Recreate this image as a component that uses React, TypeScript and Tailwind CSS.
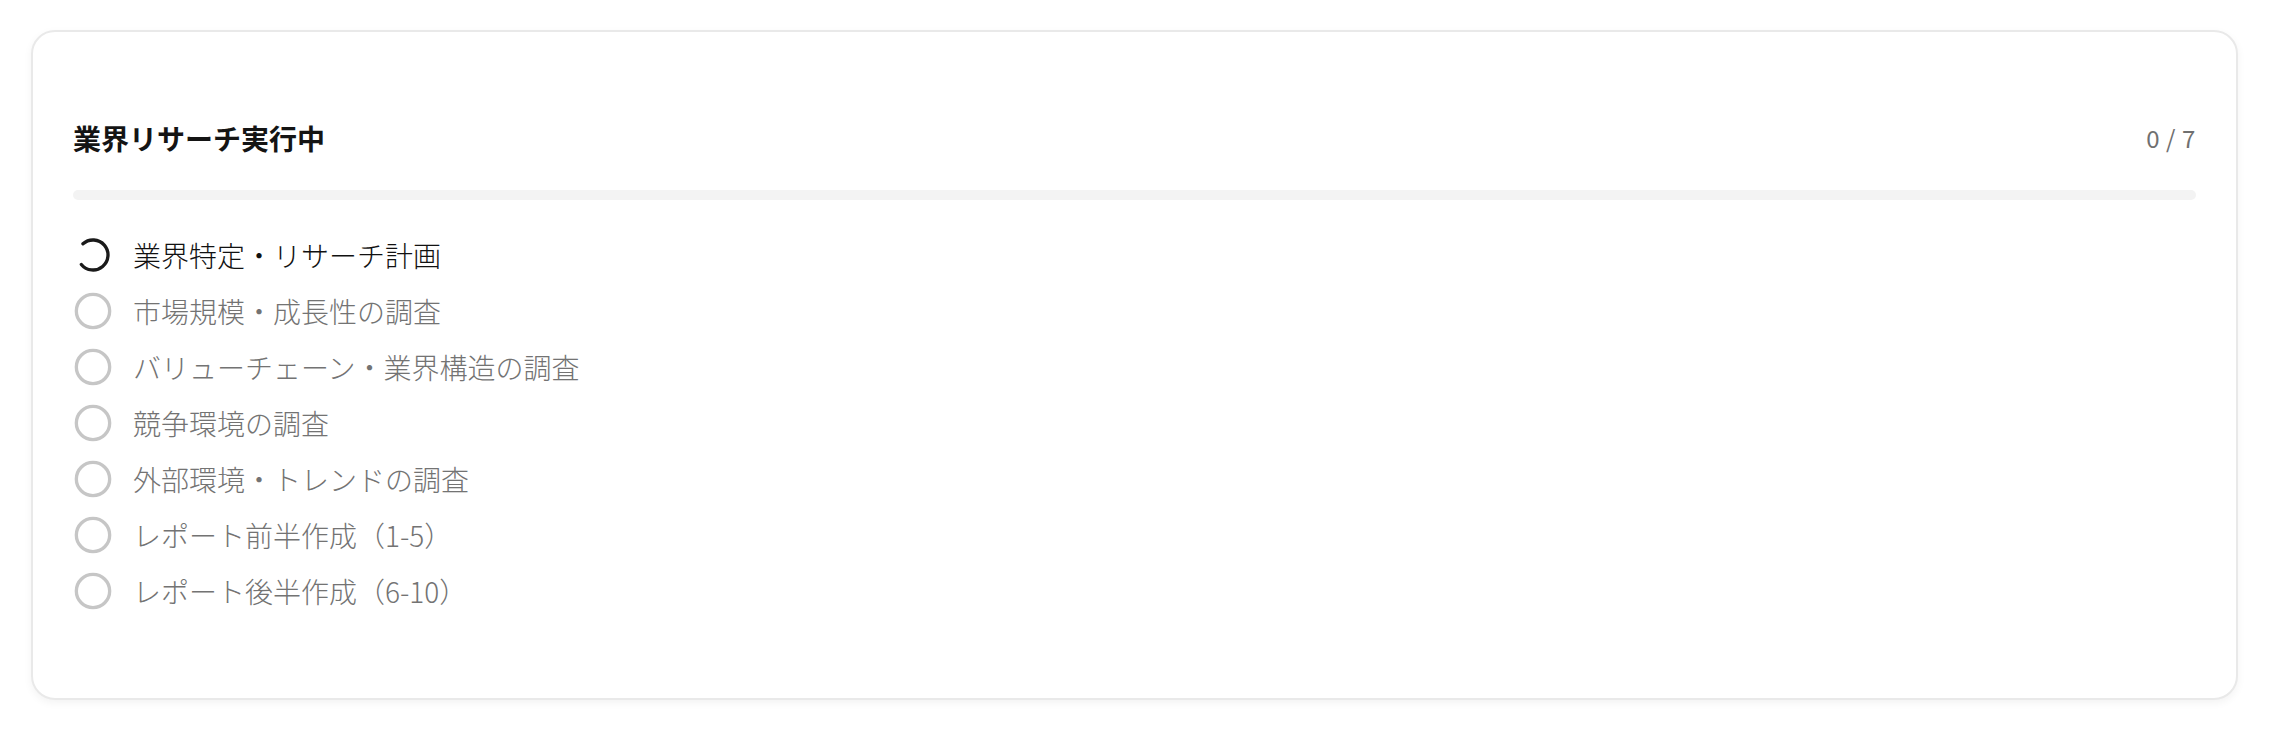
const STEPS = [
  "業界特定・リサーチ計画",
  "市場規模・成長性の調査",
  "バリューチェーン・業界構造の調査",
  "競争環境の調査",
  "外部環境・トレンドの調査",
  "レポート前半作成（1-5）",
  "レポート後半作成（6-10）",
];

const ACTIVE = 0;

function Spinner() {
  // static arc, gap on the left like the captured frame
  return (
    <svg viewBox="0 0 24 24" className="w-10 h-10 shrink-0" fill="none" aria-hidden>
      <path
        d="M5.98 5.31A9 9 0 1 1 5 17.66"
        stroke="#1a1a1a"
        strokeWidth={2}
        strokeLinecap="round"
      />
    </svg>
  );
}

function Pending() {
  return (
    <svg viewBox="0 0 24 24" className="w-10 h-10 shrink-0" fill="none" aria-hidden>
      <circle cx="12" cy="12" r="10" stroke="#c6c6c6" strokeWidth={2} />
    </svg>
  );
}

export default function App() {
  const done = 0;

  return (
    <div
      className="min-h-screen bg-white pl-[31px] pt-[30px]"
      style={{ fontFamily: '"Noto Sans CJK JP", "Noto Sans", sans-serif' }}
    >
      <div className="w-[2207px] h-[670px] rounded-[24px] border-2 border-[#e9e9e9] bg-white shadow-[0_3px_8px_rgba(0,0,0,0.05)] px-10 pt-[86px]">
        <div className="flex items-center justify-between h-10">
          <h2 className="text-[28px] leading-10 font-bold text-[#141414]">業界リサーチ実行中</h2>
          <span className="text-[24px] leading-10 text-[#707070] tracking-wide">
            {done} / {STEPS.length}
          </span>
        </div>

        <div className="mt-8 h-[10px] rounded-full bg-[#f3f3f3] overflow-hidden">
          <div className="h-full bg-[#1a1a1a]" style={{ width: `${(done / STEPS.length) * 100}%` }} />
        </div>

        <ul className="mt-[35px] flex flex-col gap-4">
          {STEPS.map((s, i) => (
            <li key={s} className="flex items-center gap-5 h-10">
              {i === ACTIVE ? <Spinner /> : <Pending />}
              <span
                className={
                  i === ACTIVE
                    ? "text-[28px] leading-10 font-light text-[#111111]"
                    : "text-[28px] leading-10 font-light text-[#737373]"
                }
              >
                {s}
              </span>
            </li>
          ))}
        </ul>
      </div>
    </div>
  );
}
